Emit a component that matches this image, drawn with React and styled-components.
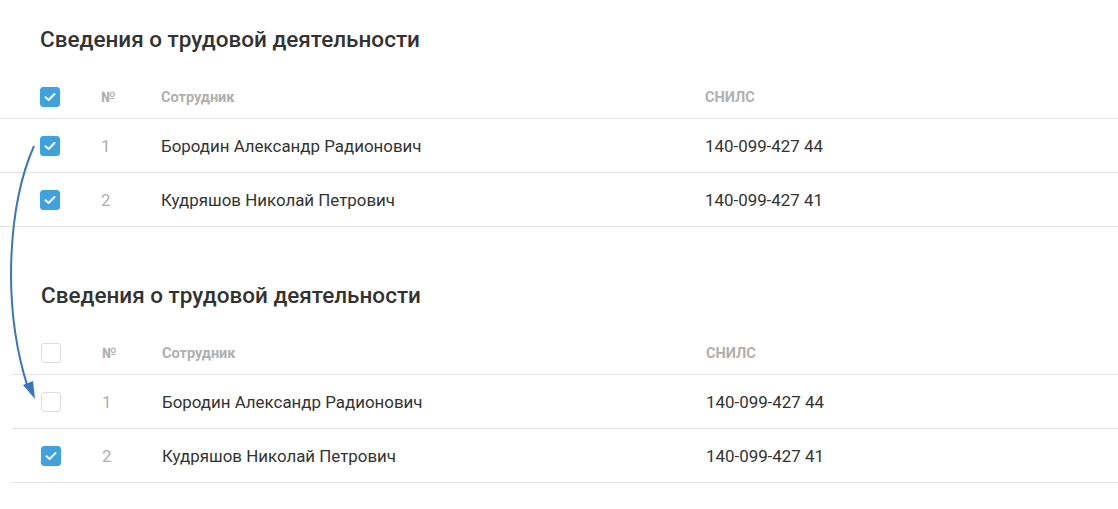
import React from "react";
import styled, { createGlobalStyle } from "styled-components";

const Global = createGlobalStyle`
  html, body { margin: 0; padding: 0; background: #fff; }
  body { font-family: Roboto, "Noto Sans", sans-serif; color: #333; }
`;

const Page = styled.div`
  position: relative;
  width: 1118px;
  height: 509px;
  overflow: hidden;
  padding-top: 26px;
  box-sizing: border-box;
`;

const Section = styled.section`
  margin-left: ${(p) => p.$lineStart}px;
  & + & { margin-top: 55px; }
`;

const Title = styled.h2`
  margin: 0 0 24px ${(p) => p.$inset}px;
  font-size: 22.5px;
  line-height: 26px;
  font-weight: 500;
  color: #333;
`;

const Row = styled.div`
  display: grid;
  grid-template-columns: 61px 60px 544px 1fr;
  align-items: center;
  height: ${(p) => (p.$head ? 43 : 54)}px;
  padding-left: ${(p) => p.$inset}px;
  border-bottom: 1px solid #e3e3e3;
  box-sizing: border-box;
`;

const HeadCell = styled.div`
  font-size: 14.5px;
  font-weight: 700;
  color: #b0b0b0;
`;

const Num = styled.div`
  font-size: 16.9px;
  color: #b0b0b0;
`;

const Cell = styled.div`
  font-size: 16.9px;
  color: #333;
`;

const Box = styled.span`
  display: flex;
  align-items: center;
  justify-content: center;
  width: 20px;
  height: 20px;
  border-radius: 3px;
  box-sizing: border-box;
  background: ${(p) => (p.$checked ? "#3fa2e0" : "#fff")};
  border: 1px solid ${(p) => (p.$checked ? "#3fa2e0" : "#dcdcdc")};
`;

const Arrow = styled.svg`
  position: absolute;
  left: 0;
  top: 0;
  pointer-events: none;
`;

function Check({ checked }) {
  return (
    <Box $checked={checked}>
      {checked && (
        <svg width="12" height="10" viewBox="0 0 12 10">
          <path d="M1.5 5.2 L4.6 8 L10.5 2" fill="none" stroke="#fff" strokeWidth="2" strokeLinecap="round" strokeLinejoin="round" />
        </svg>
      )}
    </Box>
  );
}

const people = [
  { n: 1, name: "Бородин Александр Радионович", snils: "140-099-427 44" },
  { n: 2, name: "Кудряшов Николай Петрович", snils: "140-099-427 41" },
];

function Table({ lineStart, inset, head, checks }) {
  return (
    <Section $lineStart={lineStart}>
      <Title $inset={inset}>Сведения о трудовой деятельности</Title>
      <Row $head $inset={inset}>
        <Check checked={head} />
        <HeadCell>№</HeadCell>
        <HeadCell>Сотрудник</HeadCell>
        <HeadCell>СНИЛС</HeadCell>
      </Row>
      {people.map((p, i) => (
        <Row key={p.n} $inset={inset}>
          <Check checked={checks[i]} />
          <Num>{p.n}</Num>
          <Cell>{p.name}</Cell>
          <Cell>{p.snils}</Cell>
        </Row>
      ))}
    </Section>
  );
}

export default function App() {
  return (
    <>
      <Global />
      <Page>
        <Table lineStart={0} inset={40} head={true} checks={[true, true]} />
        <Table lineStart={12} inset={29} head={false} checks={[false, true]} />
        <Arrow width="1118" height="509">
          <path d="M34 146 C 10 200, 0 300, 28 388" fill="none" stroke="#3a76be" strokeWidth="2" />
          <path d="M35 399 L23 385 L33 381 Z" fill="#3a76be" />
        </Arrow>
      </Page>
    </>
  );
}
